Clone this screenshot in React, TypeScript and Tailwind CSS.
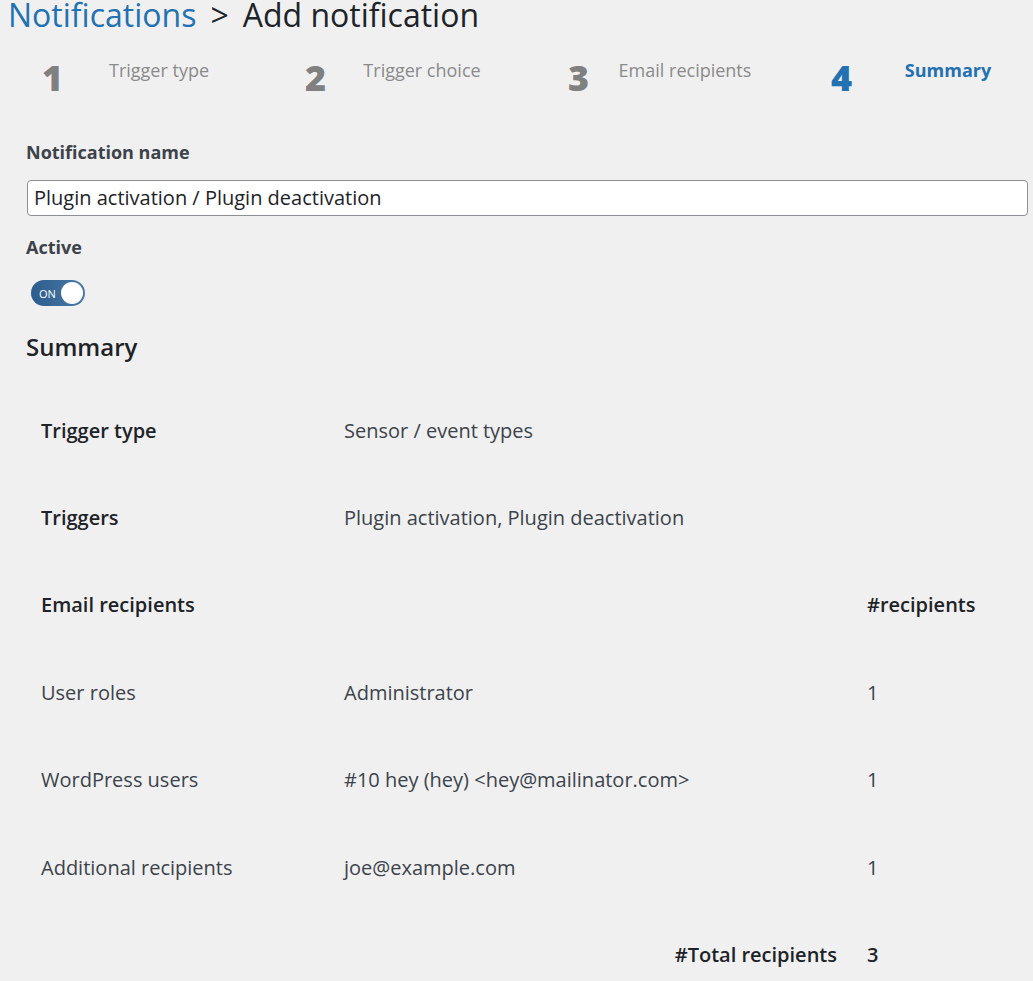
import React from "react";

const steps = [
  { n: "1", label: "Trigger type" },
  { n: "2", label: "Trigger choice" },
  { n: "3", label: "Email recipients" },
  { n: "4", label: "Summary", active: true },
];

const rows = [
  { a: "Trigger type", b: "Sensor / event types", c: "", head: true },
  { a: "Triggers", b: "Plugin activation, Plugin deactivation", c: "", head: true },
  { a: "Email recipients", b: "", c: "#recipients", head: true },
  { a: "User roles", b: "Administrator", c: "1" },
  { a: "WordPress users", b: "#10 hey (hey) <hey@mailinator.com>", c: "1" },
  { a: "Additional recipients", b: "joe@example.com", c: "1" },
];

export default function App() {
  return (
    <div
      className="min-h-[981px] bg-[#f0f0f1] text-[#1d2327] overflow-hidden"
      style={{ fontFamily: '"Open Sans", "Noto Sans", sans-serif' }}
    >
      <h1 className="pl-[8px] text-[32px] leading-[28px] pt-[1px] font-normal">
        <span className="text-[#2271b1]">Notifications</span>
        <span className="mx-[14px] text-[#1d2327]">&gt;</span>
        <span>Add notification</span>
      </h1>

      <div className="flex pl-[26px] mt-[29px] h-[64px]">
        {steps.map((s) => (
          <div key={s.n} className="flex w-[263px] shrink-0 pl-[16px]">
            <div
              className={
                "w-[24px] text-[36px] leading-[40px] font-extrabold " +
                (s.active ? "text-[#2271b1]" : "text-[#808080]")
              }
            >
              {s.n}
            </div>
            <div
              className={
                "w-[186px] text-center text-[18px] leading-[24px] " +
                (s.active ? "text-[#2271b1] font-bold" : "text-[#8a8a8a]")
              }
            >
              {s.label}
            </div>
          </div>
        ))}
      </div>

      <div className="px-[26px] pr-[5px]">
        <div className="text-[18px] leading-[24px] font-bold text-[#3c434a] mt-[18px]">
          Notification name
        </div>
        <div className="mt-[16px] ml-[1px] h-[36px] rounded-[4px] border border-[#8c8f94] bg-white flex items-center px-[6px] text-[20px] text-[#1d2327]">
          Plugin activation / Plugin deactivation
        </div>
        <div className="text-[18px] leading-[24px] font-bold text-[#3c434a] mt-[19px]">
          Active
        </div>
        <div className="mt-[21px] ml-[5px] w-[54px] h-[26px] rounded-full bg-gradient-to-r from-[#2d5d8c] to-[#4a7aa8] flex items-center justify-between pl-[8px] pr-[2px]">
          <span className="text-[11px] text-white leading-none">ON</span>
          <span className="w-[22px] h-[22px] rounded-full bg-white" />
        </div>
        <h2 className="mt-[25px] text-[24px] leading-[32px] font-semibold text-[#1d2327]">
          Summary
        </h2>

        <div className="mt-[24px] px-[15px]">
          {rows.map((r, i) => (
            <div key={i} className="grid grid-cols-[303px_523px_1fr] h-[87.4px] items-center text-[20px]">
              <div className={r.head ? "font-semibold text-[#1d2327]" : "text-[#3c434a]"}>{r.a}</div>
              <div className="text-[#3c434a]">{r.b}</div>
              <div className={r.head ? "font-semibold text-[#1d2327]" : "text-[#3c434a]"}>{r.c}</div>
            </div>
          ))}
          <div className="grid grid-cols-[826px_1fr] h-[87px] items-center text-[20px] font-semibold">
            <div className="text-right pr-[30px]">#Total recipients</div>
            <div>3</div>
          </div>
        </div>
      </div>
    </div>
  );
}
